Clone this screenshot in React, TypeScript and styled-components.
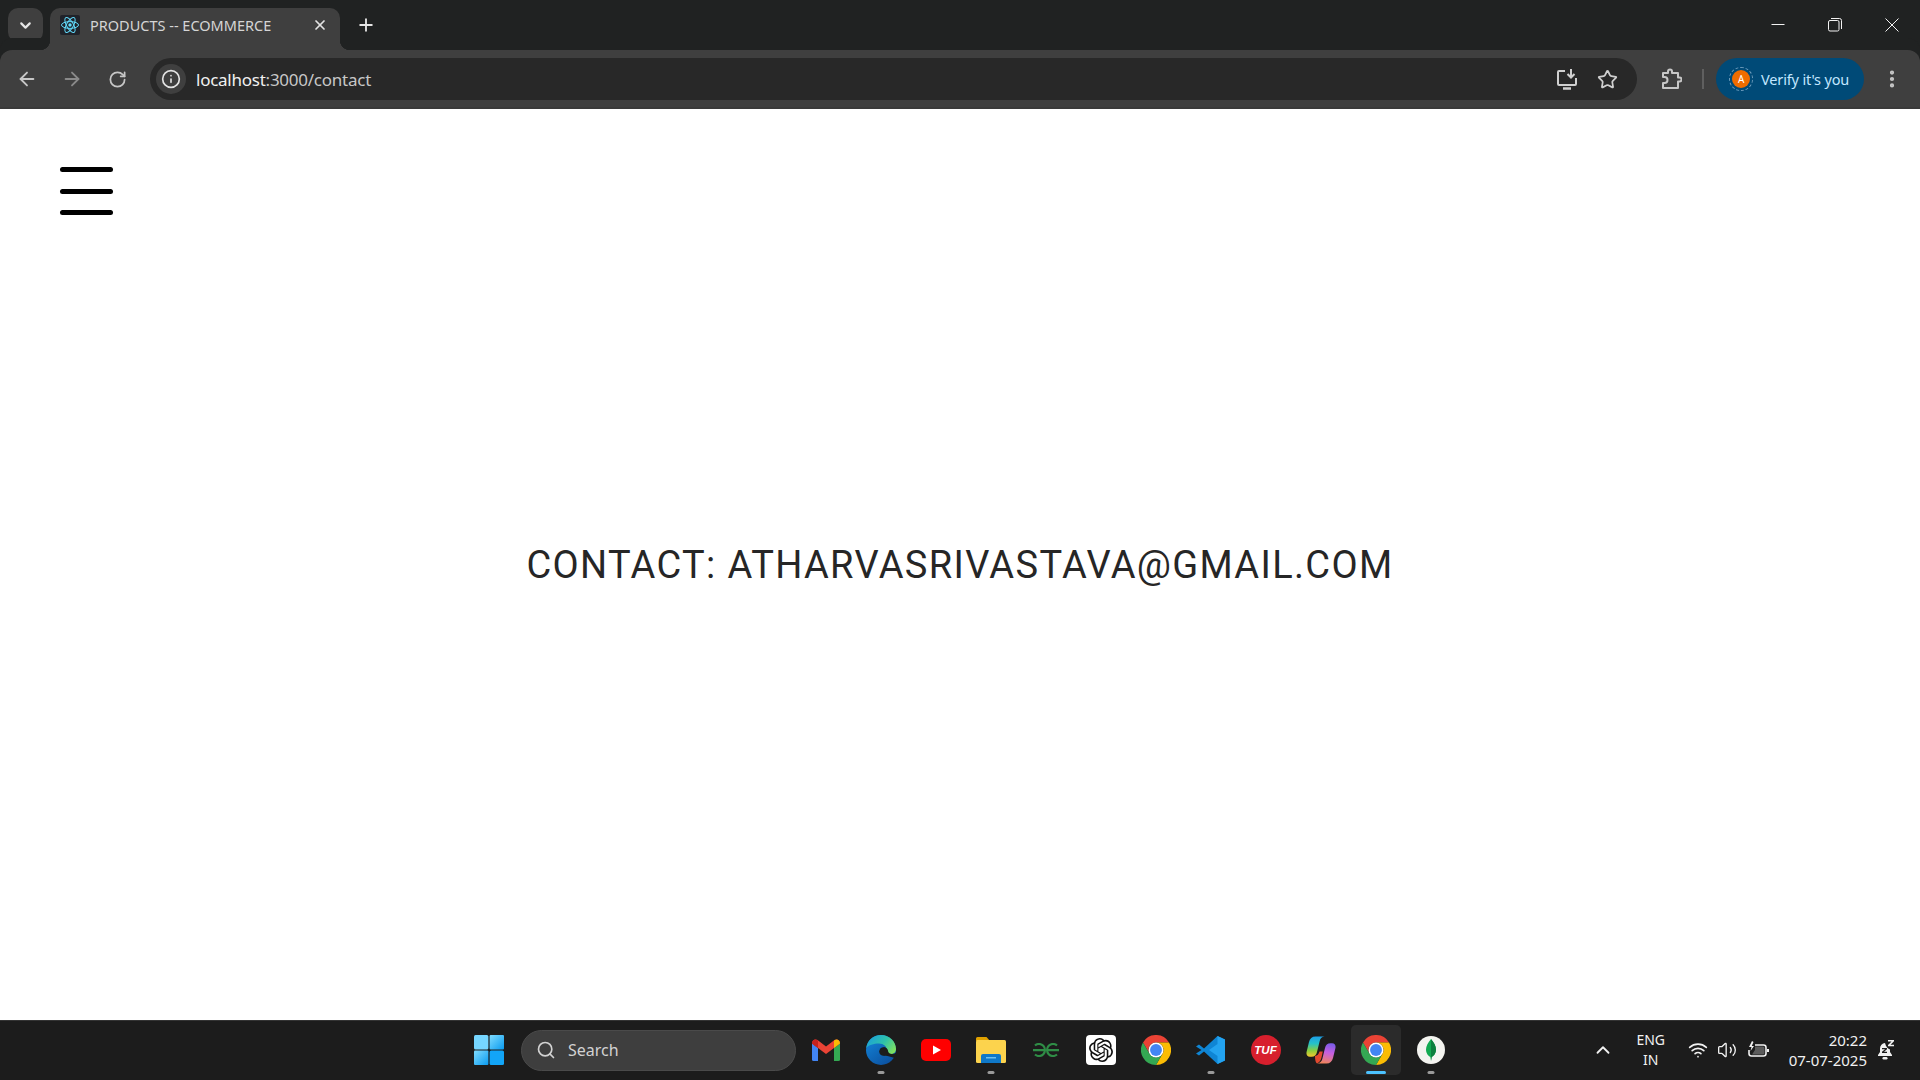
import React from 'react';
import styled, { createGlobalStyle } from 'styled-components';
import {
  ArrowLeft,
  ArrowRight,
  ChevronDown,
  ChevronUp,
  EllipsisVertical,
  Info,
  Plus,
  RotateCw,
  Search,
  Star,
  Volume2,
  Wifi,
  X,
} from 'lucide-react';
import { SiOpenai } from 'react-icons/si';

const UI_FONT = `"Noto Sans", "Open Sans", sans-serif`;

const GlobalStyle = createGlobalStyle`
  html, body {
    margin: 0;
    padding: 0;
    background: #fff;
  }
  body {
    font-family: ${UI_FONT};
    overflow: hidden;
  }
  * {
    box-sizing: border-box;
  }
`;

const Screen = styled.div`
  width: 1920px;
  height: 1080px;
  display: flex;
  flex-direction: column;
`;

const TabStrip = styled.div`
  height: 50px;
  flex: none;
  display: flex;
  background: #202222;
  padding-left: 8px;
`;

const TabSearch = styled.div`
  width: 35px;
  height: 34px;
  margin-top: 8px;
  border-radius: 10px;
  background: #3f3f3f;
  color: #e6e6e6;
  display: flex;
  align-items: center;
  justify-content: center;
`;

const Tab = styled.div`
  position: relative;
  width: 290px;
  height: 42px;
  margin: 8px 0 0 7px;
  padding: 0 10px 8px;
  display: flex;
  align-items: center;
  background: #3f3f3f;
  border-radius: 10px 10px 0 0;
  color: #d5d5d5;
  font-size: 14.5px;
  letter-spacing: 0;

  &::before,
  &::after {
    content: '';
    position: absolute;
    bottom: 0;
    width: 10px;
    height: 10px;
  }
  &::before {
    left: -10px;
    background: radial-gradient(circle at 0 0, transparent 10px, #3f3f3f 10.5px);
  }
  &::after {
    right: -10px;
    background: radial-gradient(circle at 100% 0, transparent 10px, #3f3f3f 10.5px);
  }
`;

const Favicon = styled.svg`
  width: 20px;
  height: 20px;
  flex: none;
  margin-right: 10px;
`;

const TabTitle = styled.span`
  flex: 1;
  white-space: nowrap;
`;

const TabClose = styled.div`
  color: #e2e2e2;
  display: flex;
  margin-right: 2px;
`;

const NewTab = styled.div`
  width: 30px;
  margin: 8px 0 0 11px;
  height: 34px;
  color: #e6e6e6;
  display: flex;
  align-items: center;
  justify-content: center;
`;

const WindowControls = styled.div`
  margin-left: auto;
  display: flex;
  height: 50px;
`;

const WindowButton = styled.div`
  width: 57px;
  display: flex;
  align-items: center;
  justify-content: center;
  color: #f2f2f2;
`;

const Toolbar = styled.div`
  height: 59px;
  flex: none;
  display: flex;
  align-items: center;
  padding: 1px 10px 0 9px;
  background: #3f3f3f;
  border-radius: 12px 12px 0 0;
  border-bottom: 2px solid #3a3a3a;
  box-shadow: 0 -12px 0 #202222;
`;

const NavButton = styled.div<{ $dim?: boolean }>`
  width: 36px;
  height: 36px;
  margin-right: 9px;
  display: flex;
  align-items: center;
  justify-content: center;
  color: ${(p) => (p.$dim ? '#8a8a8a' : '#c7c7c7')};
`;

const AddressBar = styled.div`
  flex: 1;
  height: 42px;
  margin-left: 6px;
  display: flex;
  align-items: center;
  padding: 0 9px 0 6px;
  background: #282828;
  border-radius: 21px;
`;

const SiteInfo = styled.div`
  width: 30px;
  height: 30px;
  border-radius: 50%;
  background: #3f3f3f;
  color: #e3e3e3;
  display: flex;
  align-items: center;
  justify-content: center;
  margin-right: 10px;
`;

const Url = styled.span`
  font-size: 17px;
  letter-spacing: -0.25px;
  color: #c7c7c7;
  flex: 1;

  b {
    font-weight: 400;
    color: #f0f0f0;
  }
`;

const AddressAction = styled.div`
  width: 41px;
  display: flex;
  justify-content: center;
  color: #d0d0d0;
`;

const ExtensionButton = styled.div`
  width: 36px;
  margin-left: 16px;
  display: flex;
  justify-content: center;
  color: #c7c7c7;
`;

const Divider = styled.div`
  width: 2px;
  height: 20px;
  margin: 0 12px 0 13px;
  background: #5f5f5f;
`;

const VerifyPill = styled.div`
  width: 148px;
  height: 42px;
  border-radius: 21px;
  background: #004a77;
  color: #c2e7ff;
  display: flex;
  align-items: center;
  padding-left: 13px;
  font-size: 14.5px;
  letter-spacing: -0.15px;
  white-space: nowrap;
`;

const AvatarRing = styled.div`
  width: 24px;
  height: 24px;
  margin-right: 8px;
  flex: none;
  border-radius: 50%;
  border: 1px dashed #6d9cbc;
  display: flex;
  align-items: center;
  justify-content: center;
`;

const Avatar = styled.div`
  width: 18px;
  height: 18px;
  border-radius: 50%;
  background: #ef6c00;
  color: #fff;
  font-size: 10px;
  display: flex;
  align-items: center;
  justify-content: center;
`;

const MenuDots = styled.div`
  width: 36px;
  margin-left: 10px;
  display: flex;
  justify-content: center;
  color: #c7c7c7;
`;

const Page = styled.main`
  position: relative;
  flex: 1;
  background: #fff;
  display: flex;
  align-items: center;
  justify-content: center;
`;

const Hamburger = styled.div`
  position: absolute;
  left: 60px;
  top: 58px;
  width: 53px;
  display: flex;
  flex-direction: column;
  gap: 16.5px;
`;

const HamburgerBar = styled.span`
  display: block;
  height: 5px;
  border-radius: 3px;
  background: #000;
`;

const ContactLine = styled.h1`
  margin: 0;
  font-family: Roboto, sans-serif;
  font-size: 38px;
  font-weight: 400;
  letter-spacing: 1.35px;
  color: #262626;
  text-transform: uppercase;
  white-space: nowrap;
`;

const Taskbar = styled.footer`
  height: 60px;
  flex: none;
  display: grid;
  grid-template-columns: 1fr auto 1fr;
  align-items: center;
  background: #1c1c1c;
  border-top: 1px solid #333;
`;

const TaskbarCenter = styled.div`
  grid-column: 2;
  display: flex;
  align-items: center;
  height: 100%;
  padding: 0 0 1px 2px;
`;

const StartButton = styled.div`
  width: 50px;
  height: 50px;
  margin-right: 7px;
  display: flex;
  align-items: center;
  justify-content: center;
`;

const SearchBox = styled.div`
  width: 275px;
  height: 41px;
  display: flex;
  align-items: center;
  padding-left: 14px;
  border-radius: 21px;
  background: #3e3e3e;
  border: 1px solid #4a4a4a;
  color: #d2d2d2;
  font-size: 16px;
  gap: 12px;
  margin-right: 2px;
`;

const AppIcon = styled.div<{ $active?: boolean; $indicator?: 'open' | 'focus' }>`
  position: relative;
  width: 50px;
  height: 50px;
  margin: 0 2.5px;
  border-radius: 5px;
  display: flex;
  align-items: center;
  justify-content: center;
  background: ${(p) => (p.$active ? '#2b2b2b' : 'transparent')};

  &::after {
    content: '';
    display: ${(p) => (p.$indicator ? 'block' : 'none')};
    position: absolute;
    bottom: 1px;
    left: 50%;
    transform: translateX(-50%);
    height: 3px;
    border-radius: 2px;
    width: ${(p) => (p.$indicator === 'focus' ? '20px' : '7px')};
    background: ${(p) => (p.$indicator === 'focus' ? '#4cc2ff' : '#9a9a9a')};
  }
`;

const WhiteTile = styled.div`
  width: 30px;
  height: 30px;
  border-radius: 4px;
  background: #fff;
  color: #111;
  display: flex;
  align-items: center;
  justify-content: center;
`;

const TufBadge = styled.div`
  width: 30px;
  height: 30px;
  border-radius: 50%;
  background: #d71f2d;
  color: #fff;
  font-family: 'Liberation Sans', sans-serif;
  font-size: 11.5px;
  font-style: italic;
  font-weight: 700;
  display: flex;
  align-items: center;
  justify-content: center;
`;

const Tray = styled.div`
  grid-column: 3;
  justify-self: end;
  display: flex;
  align-items: center;
  color: #f1f1f1;
  padding: 0 23px 2px 0;
`;

const TrayChevron = styled.div`
  display: flex;
  margin-right: 17px;
`;

const LangBlock = styled.div`
  width: 40px;
  text-align: center;
  font-size: 14px;
  line-height: 20px;
  margin-right: 17px;
`;

const StatusIcons = styled.div`
  display: flex;
  align-items: center;
  gap: 9px;
  margin-right: 19px;
`;

const BatteryIcon = styled.svg`
  margin-left: 2px;
`;

const Clock = styled.div`
  text-align: right;
  font-size: 15px;
  line-height: 20px;
  margin-right: 10px;
  white-space: nowrap;
`;

const ChromeLogo = () => (
  <svg width="30" height="30" viewBox="0 0 48 48">
    <path d="M3.2 12A24 24 0 0 1 44.8 12H24A12 12 0 0 0 13.6 30Z" fill="#ea4335" />
    <path d="M44.8 12A24 24 0 0 1 24 48L34.4 30A12 12 0 0 0 24 12Z" fill="#fbbc04" />
    <path d="M24 48A24 24 0 0 1 3.2 12L13.6 30A12 12 0 0 0 34.4 30Z" fill="#34a853" />
    <circle cx="24" cy="24" r="12" fill="#fff" />
    <circle cx="24" cy="24" r="9.5" fill="#4285f4" />
  </svg>
);

const WindowsLogo = () => (
  <svg width="30" height="30" viewBox="0 0 30 30">
    <defs>
      <linearGradient id="winTile" x1="0" y1="0" x2="1" y2="1">
        <stop offset="0" stopColor="#7fdcff" />
        <stop offset="1" stopColor="#0a9bf0" />
      </linearGradient>
    </defs>
    <rect x="0" y="0" width="14.4" height="14.4" rx="1.5" fill="#76d6ff" />
    <rect x="15.6" y="0" width="14.4" height="14.4" rx="1" fill="url(#winTile)" />
    <rect x="0" y="15.6" width="14.4" height="14.4" rx="1" fill="url(#winTile)" />
    <rect x="15.6" y="15.6" width="14.4" height="14.4" rx="1.5" fill="#12a5f7" />
  </svg>
);

const GmailLogo = () => (
  <svg width="30" height="30" viewBox="0 0 30 30">
    <path d="M1 8.5V24.5a1.5 1.5 0 0 0 1.5 1.5H7V13Z" fill="#4285f4" />
    <path d="M23 13V26h4.5a1.5 1.5 0 0 0 1.5-1.5V8.5Z" fill="#34a853" />
    <path d="M7 13 1 8.5C1 5 4 3.5 6.5 5L15 11.5 23.5 5C26 3.5 29 5 29 8.5L23 13 15 19Z" fill="#ea4335" />
    <path d="M23 13V6.2L23.5 5C26 3.5 29 5 29 8.5Z" fill="#fbbc04" />
    <path d="M1 8.5C1 5 4 3.5 6.5 5L7 6.2V13Z" fill="#c5221f" />
  </svg>
);

const EdgeLogo = () => (
  <svg width="32" height="32" viewBox="0 0 32 32">
    <defs>
      <linearGradient id="edgeTop" x1="0" y1="0.2" x2="1" y2="0.7">
        <stop offset="0" stopColor="#1a9fdc" />
        <stop offset="0.55" stopColor="#2fc2a8" />
        <stop offset="1" stopColor="#7fe060" />
      </linearGradient>
      <linearGradient id="edgeLow" x1="0" y1="0" x2="0.8" y2="1">
        <stop offset="0" stopColor="#1488dc" />
        <stop offset="1" stopColor="#0b4f9e" />
      </linearGradient>
    </defs>
    <circle cx="16" cy="16" r="15" fill="url(#edgeLow)" />
    <path d="M1.200 14C2.500 6 8.500 1 16 1c8.500 0 15 6.500 15 14 0 3-2 5-5.500 5-2.500 0-3.500-1.500-3.500-3.500 0-4-3.500-7-8-7C8.500 9.500 3.500 11 1.200 14Z" fill="url(#edgeTop)" />
    <circle cx="18.500" cy="17.500" r="4.300" fill="#1c1c1c" />
    <path d="M18.500 13.200C21 13.200 22.800 15 23 17c.3 2 2 3 4 3 1.500 0 3-.5 4.500-1.500L32 25c-3-1.500-8-3-13.500-3.500Z" fill="#1c1c1c" />
  </svg>
);

const YoutubeLogo = () => (
  <svg width="30" height="22" viewBox="0 0 30 22">
    <rect width="30" height="22" rx="5" fill="#f00" />
    <path d="M12 6.500 20 11l-8 4.500Z" fill="#fff" />
  </svg>
);

const FolderLogo = () => (
  <svg width="32" height="30" viewBox="0 0 32 30">
    <path d="M1 3.500A1.500 1.500 0 0 1 2.500 2h9L15 6h-14Z" fill="#e0a100" />
    <rect x="1" y="5" width="30" height="23" rx="1.500" fill="#fcd34d" />
    <path d="M6 21a2 2 0 0 1 2-2h16a2 2 0 0 1 2 2v7H6Z" fill="#0f78c8" />
    <rect x="11" y="22" width="10" height="1.500" fill="#6cc0f0" />
  </svg>
);

const GfgLogo = () => (
  <svg width="28" height="14" viewBox="0 0 28 14" fill="none" stroke="#2f8d46" strokeWidth="2.200">
    <path d="M3 2.500A6 6 0 1 1 3 11.500M1 7.200h12.500" />
    <path d="M25 2.500A6 6 0 1 0 25 11.500M27 7.200H14.500" />
  </svg>
);

const VscodeLogo = () => (
  <svg width="30" height="30" viewBox="0 0 30 30">
    <path d="M21.500 1 29 4.500v21L21.500 29 8 16.500 3 20.500 0 18.500 5.500 15 0 11.500 3 9.500 8 13.500Z" fill="#0f85d4" />
    <path d="M21.500 1 29 4.500v21L21.500 29ZM21.500 9 13 15l8.500 6Z" fill="#23a3f0" fillRule="evenodd" />
  </svg>
);

const CopilotLogo = () => (
  <svg width="30" height="30" viewBox="0 0 30 30">
    <defs>
      <linearGradient id="copilotLeft" x1="0.4" y1="0" x2="0.4" y2="1">
        <stop offset="0" stopColor="#1d9fe8" />
        <stop offset="0.35" stopColor="#25c2c8" />
        <stop offset="0.7" stopColor="#8ccf3c" />
        <stop offset="1" stopColor="#f6c72e" />
      </linearGradient>
      <linearGradient id="copilotRight" x1="0.6" y1="0" x2="0.4" y2="1">
        <stop offset="0" stopColor="#7a5ce8" />
        <stop offset="0.45" stopColor="#c65fe0" />
        <stop offset="1" stopColor="#f0845a" />
      </linearGradient>
    </defs>
    <path d="M9.500 1.500h9c-3 .2-4.200 2-4.800 4.500L11 17c-.7 2.800-2.300 4.800-5.500 4.800H4C1.500 21.800 0 20 .5 17.300L3 7C3.800 3.500 6 1.500 9.500 1.500Z" fill="url(#copilotLeft)" />
    <path d="M20.500 28.500h-9.500c3-.2 4.700-2 5.300-4.500L19 13c.7-2.800 2.300-4.800 5.500-4.800H26c2.500 0 4 1.800 3.500 4.500L27 23c-.8 3.500-3 5.500-6.500 5.500Z" fill="url(#copilotRight)" />
    <path d="M9 21c2.500-.3 3.700-1.800 4.500-4.500h3.300l-1.300 6c-.6 2.800-2.300 5.200-4.500 6-1.500-1-2-3.800-2-7.500Z" fill="#e2492f" />
  </svg>
);

const MongoLogo = () => (
  <svg width="30" height="30" viewBox="0 0 30 30">
    <circle cx="15" cy="15" r="14" fill="#f4f4f0" />
    <path d="M15 4c3 3.500 5 7 5 10.500 0 4-2.500 6.500-4.300 7.500L15 26l-.7-4C12.500 21 10 18.500 10 14.500 10 11 12 7.500 15 4Z" fill="#13aa52" />
    <path d="M15 4c3 3.500 5 7 5 10.500 0 4-2.500 6.500-4.300 7.500L15 26Z" fill="#0d7f3e" />
  </svg>
);

const BatteryCharging = () => (
  <BatteryIcon width="22" height="18" viewBox="0 0 22 18" fill="none" stroke="currentColor" strokeWidth="1.600">
    <path d="M7 4h8.500A2.500 2.500 0 0 1 18 6.500v6a2.500 2.500 0 0 1-2.500 2.500H3.500A2.500 2.500 0 0 1 1 12.500V9" />
    <path d="M7 5.500h8a1.500 1.500 0 0 1 1.500 1.500v5a1.500 1.500 0 0 1-1.500 1.500H4L7 9Z" fill="#5a5a5a" stroke="none" />
    <path d="M20 8v3" strokeWidth="2" />
    <path d="M4 0 1 6h2.500L2.500 10 6 5H3.800L5.500 1Z" fill="currentColor" stroke="none" />
  </BatteryIcon>
);

const BellSnooze = () => (
  <svg width="20" height="22" viewBox="0 0 20 22" fill="#f1f1f1">
    <path d="M8 4a5.500 5.500 0 0 0-5 5.500V13l-2 3v1h14v-1l-2-3v-2.500C11 10 9 8 8 4Z" />
    <rect x="5.500" y="18" width="5" height="2.500" rx="1.200" />
    <path d="M11 1h6v1.300l-3.500 3.500H17V7.200h-6V5.900l3.500-3.500H11Z" />
    <path d="M5 9h5v1.200l-3 2.600h3V14H5v-1.200l3-2.600H5Z" fill="#1c1c1c" />
  </svg>
);

const apps = [
  { key: 'gmail', node: <GmailLogo /> },
  { key: 'edge', node: <EdgeLogo />, indicator: 'open' as const },
  { key: 'youtube', node: <YoutubeLogo /> },
  { key: 'files', node: <FolderLogo />, indicator: 'open' as const },
  { key: 'gfg', node: <GfgLogo /> },
  { key: 'chatgpt', node: <WhiteTile><SiOpenai size={24} /></WhiteTile> },
  { key: 'chrome', node: <ChromeLogo /> },
  { key: 'vscode', node: <VscodeLogo />, indicator: 'open' as const },
  { key: 'tuf', node: <TufBadge>TUF</TufBadge> },
  { key: 'copilot', node: <CopilotLogo /> },
  { key: 'chrome-active', node: <ChromeLogo />, indicator: 'focus' as const, active: true },
  { key: 'mongo', node: <MongoLogo />, indicator: 'open' as const },
];

const App = () => (
  <Screen>
    <GlobalStyle />
    <TabStrip>
      <TabSearch>
        <ChevronDown size={17} strokeWidth={3} />
      </TabSearch>
      <Tab>
        <Favicon viewBox="0 0 20 20">
          <rect width="20" height="20" rx="2" fill="#20232a" />
          <g fill="none" stroke="#61dafb" strokeWidth="1">
            <ellipse cx="10" cy="10" rx="8.500" ry="3.400" />
            <ellipse cx="10" cy="10" rx="8.500" ry="3.400" transform="rotate(60 10 10)" />
            <ellipse cx="10" cy="10" rx="8.500" ry="3.400" transform="rotate(120 10 10)" />
          </g>
          <circle cx="10" cy="10" r="1.700" fill="#61dafb" />
        </Favicon>
        <TabTitle>PRODUCTS -- ECOMMERCE</TabTitle>
        <TabClose>
          <X size={16} strokeWidth={2.6} />
        </TabClose>
      </Tab>
      <NewTab>
        <Plus size={20} strokeWidth={2.2} />
      </NewTab>
      <WindowControls>
        <WindowButton>
          <svg width="14" height="14" viewBox="0 0 14 14" stroke="currentColor" fill="none">
            <path d="M0.500 6.500h13" />
          </svg>
        </WindowButton>
        <WindowButton>
          <svg width="14" height="14" viewBox="0 0 14 14" stroke="currentColor" fill="none">
            <rect x="0.500" y="2.500" width="10.500" height="10.500" rx="1.500" />
            <path d="M3 .5h8.500a2 2 0 0 1 2 2V11" />
          </svg>
        </WindowButton>
        <WindowButton>
          <svg width="14" height="14" viewBox="0 0 14 14" stroke="currentColor" fill="none">
            <path d="M.5.5l13 13M13.500.5l-13 13" />
          </svg>
        </WindowButton>
      </WindowControls>
    </TabStrip>

    <Toolbar>
      <NavButton>
        <ArrowLeft size={22} strokeWidth={2} />
      </NavButton>
      <NavButton $dim>
        <ArrowRight size={22} strokeWidth={2} />
      </NavButton>
      <NavButton>
        <RotateCw size={19} strokeWidth={2.2} />
      </NavButton>
      <AddressBar>
        <SiteInfo>
          <Info size={20} strokeWidth={2} />
        </SiteInfo>
        <Url>
          <b>localhost</b>:3000/contact
        </Url>
        <AddressAction>
          <svg width="22" height="22" viewBox="0 0 22 22" fill="none" stroke="currentColor" strokeWidth="2">
            <path d="M9 3H3a1 1 0 0 0-1 1v12a1 1 0 0 0 1 1h16a1 1 0 0 0 1-1v-6" />
            <path d="M15 1v8M11.500 6l3.500 3.500L18.500 6" />
            <path d="M7 20.500h8" strokeWidth="2.500" />
          </svg>
        </AddressAction>
        <AddressAction>
          <Star size={21} strokeWidth={2} />
        </AddressAction>
      </AddressBar>
      <ExtensionButton>
        <svg width="22" height="22" viewBox="0 0 22 22" fill="none" stroke="currentColor" strokeWidth="2" strokeLinejoin="round">
          <path d="M3 5h5V3.500a2 2 0 0 1 4 0V5h6v4.500h1.500a2 2 0 0 1 0 4H18V20H3v-5h1.500a2 2 0 0 0 0-6H3Z" />
        </svg>
      </ExtensionButton>
      <Divider />
      <VerifyPill>
        <AvatarRing>
          <Avatar>A</Avatar>
        </AvatarRing>
        Verify it's you
      </VerifyPill>
      <MenuDots>
        <EllipsisVertical size={22} strokeWidth={2.6} />
      </MenuDots>
    </Toolbar>

    <Page>
      <Hamburger>
        <HamburgerBar />
        <HamburgerBar />
        <HamburgerBar />
      </Hamburger>
      <ContactLine>Contact: atharvasrivastava@gmail.com</ContactLine>
    </Page>

    <Taskbar>
      <TaskbarCenter>
        <StartButton>
          <WindowsLogo />
        </StartButton>
        <SearchBox>
          <Search size={20} strokeWidth={2} />
          Search
        </SearchBox>
        {apps.map((app) => (
          <AppIcon key={app.key} $active={app.active} $indicator={app.indicator}>
            {app.node}
          </AppIcon>
        ))}
      </TaskbarCenter>
      <Tray>
        <TrayChevron>
          <ChevronUp size={22} strokeWidth={2} />
        </TrayChevron>
        <LangBlock>
          ENG
          <br />
          IN
        </LangBlock>
        <StatusIcons>
          <Wifi size={20} strokeWidth={2} />
          <Volume2 size={20} strokeWidth={1.6} />
          <BatteryCharging />
        </StatusIcons>
        <Clock>
          20:22
          <br />
          07-07-2025
        </Clock>
        <BellSnooze />
      </Tray>
    </Taskbar>
  </Screen>
);

export default App;
